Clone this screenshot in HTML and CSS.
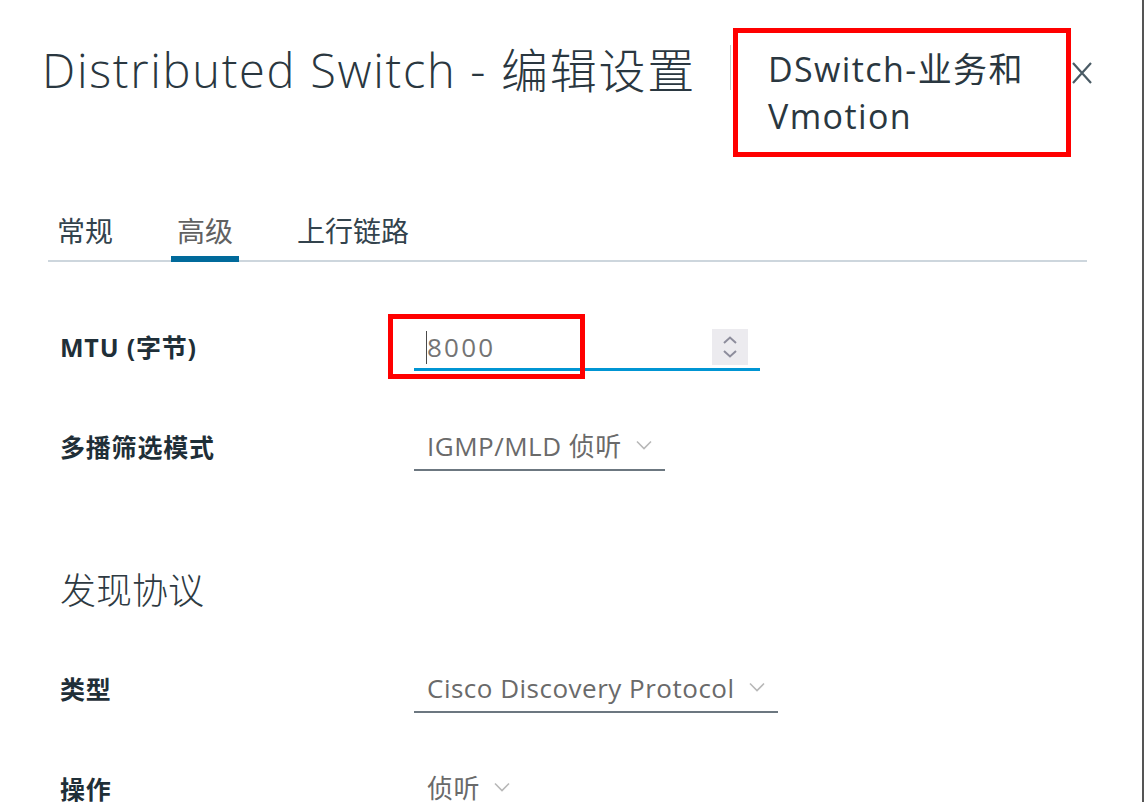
FILE: index.html
```html
<!DOCTYPE html>
<html lang="zh-CN">
<head>
<meta charset="utf-8">
<title>Distributed Switch - 编辑设置</title>
<link rel="stylesheet" href="styles.css">
</head>
<body>
<div class="window">
  <header class="header">
    <h1 class="title">Distributed Switch - 编辑设置</h1>
    <span class="divider"></span>
    <div class="subtitle">DSwitch-业务和<br>Vmotion</div>
    <button class="close" type="button" aria-label="关闭">
      <svg width="20" height="22" viewBox="0 0 20 22"><path d="M1 1 L19 21 M19 1 L1 21" stroke="#4a5b65" stroke-width="2.2" fill="none"/></svg>
    </button>
  </header>

  <nav class="tabs">
    <a class="tab">常规</a>
    <a class="tab active">高级</a>
    <a class="tab">上行链路</a>
  </nav>

  <div class="form">
    <div class="row">
      <div class="label">MTU (字节)</div>
      <div class="input">
        <span class="caret"></span><span class="input-text">8000</span>
        <span class="spinner">
          <svg width="14" height="8" viewBox="0 0 14 8"><polyline points="1,7 7,1.5 13,7" fill="none" stroke="#8d8d9c" stroke-width="2"/></svg>
          <svg width="14" height="8" viewBox="0 0 14 8"><polyline points="1,1 7,6.5 13,1" fill="none" stroke="#8d8d9c" stroke-width="2"/></svg>
        </span>
        <span class="annot"></span>
      </div>
    </div>

    <div class="row">
      <div class="label">多播筛选模式</div>
      <div class="select">
        <span class="select-text">IGMP/MLD 侦听</span>
        <svg class="chev" width="16" height="10" viewBox="0 0 16 10"><polyline points="1,1.5 8,8.5 15,1.5" fill="none" stroke="#b8b8b8" stroke-width="1.6"/></svg>
      </div>
    </div>

    <h2 class="section">发现协议</h2>

    <div class="row">
      <div class="label">类型</div>
      <div class="select">
        <span class="select-text">Cisco Discovery Protocol</span>
        <svg class="chev" width="16" height="10" viewBox="0 0 16 10"><polyline points="1,1.5 8,8.5 15,1.5" fill="none" stroke="#b8b8b8" stroke-width="1.6"/></svg>
      </div>
    </div>

    <div class="row">
      <div class="label">操作</div>
      <div class="select">
        <span class="select-text">侦听</span>
        <svg class="chev" width="16" height="10" viewBox="0 0 16 10"><polyline points="1,1.5 8,8.5 15,1.5" fill="none" stroke="#b8b8b8" stroke-width="1.6"/></svg>
      </div>
    </div>
  </div>
</div>
</body>
</html>
```

FILE: styles.css
```css
html, body {
  margin: 0;
  padding: 0;
  background: #ffffff;
}

body {
  width: 1144px;
  height: 802px;
  overflow: hidden;
  font-family: "Open Sans", "Noto Sans CJK SC", sans-serif;
}

.window {
  box-sizing: border-box;
  width: 1144px;
  height: 802px;
  padding-left: 44px;
  border-right: 2px solid #555555;
}

/* Header */
.header {
  display: flex;
  align-items: flex-start;
  padding-top: 28px;
  padding-right: 50px;
}

.title {
  margin: 14px 0 0 -2px;
  font-size: 47px;
  line-height: 56px;
  font-weight: 300;
  color: #2a3740;
  white-space: nowrap;
  letter-spacing: 1.7px;
}

.divider {
  margin-left: auto;
  margin-top: 17px;
  margin-right: 2px;
  width: 1px;
  height: 45px;
  background: #c9c9c9;
}

.subtitle {
  box-sizing: border-box;
  width: 338px;
  height: 129px;
  border: 5px solid #ff0000;
  padding: 13px 0 0 30px;
  font-size: 34px;
  line-height: 47px;
  font-weight: 400;
  letter-spacing: 1.4px;
  color: #2a3740;
}

.close {
  margin: 34px 0 0 1px;
  padding: 0;
  border: 0;
  background: none;
  width: 20px;
  height: 22px;
  display: block;
}

.close svg {
  display: block;
}

/* Tabs */
.tabs {
  display: flex;
  gap: 52px;
  margin: 56px 0 0 4px;
  padding-left: 3px;
  width: 1036px;
  border-bottom: 2px solid #cdd6dd;
}

.tab {
  display: block;
  padding: 0 6px 7px;
  margin-bottom: -2px;
  border-bottom: 6px solid transparent;
  font-size: 28px;
  line-height: 36px;
  color: #33434d;
  cursor: pointer;
}

.tab.active {
  border-bottom-color: #006a9b;
  color: #616161;
}

/* Form */
.form {
  display: flex;
  flex-direction: column;
  gap: 54px;
  padding: 64px 0 0 16px;
}

.row {
  display: grid;
  grid-template-columns: 354px auto;
  align-items: center;
  justify-items: start;
}

.label {
  font-size: 25px;
  font-weight: 700;
  letter-spacing: 0.8px;
  color: #1f2f38;
  line-height: 32px;
  margin-top: -3px;
}

.input {
  position: relative;
  box-sizing: border-box;
  width: 346px;
  height: 45px;
  display: flex;
  align-items: center;
  padding-left: 12px;
  padding-right: 12px;
  border-bottom: 3px solid #0095d3;
}

.caret {
  display: inline-block;
  width: 1px;
  height: 33px;
  background: #4a4a4a;
}

.input-text {
  flex: 1;
  font-size: 26px;
  letter-spacing: 2.2px;
  color: #747474;
  line-height: 34px;
}

.spinner {
  width: 36px;
  height: 36px;
  background: #ecebef;
  display: flex;
  flex-direction: column;
  align-items: center;
  justify-content: center;
  gap: 6px;
}

.spinner svg {
  display: block;
}

.annot {
  position: absolute;
  left: -26px;
  top: -12px;
  width: 197px;
  height: 65px;
  box-sizing: border-box;
  border: 5px solid #ff0000;
  pointer-events: none;
}

.select {
  box-sizing: border-box;
  height: 46px;
  display: inline-flex;
  align-items: center;
  padding: 0 13px;
  border-bottom: 2px solid #6c7780;
}

.select-text {
  font-size: 26px;
  letter-spacing: 0.5px;
  color: #6a6a6a;
  line-height: 34px;
  margin-top: -2px;
}

.chev {
  display: block;
  margin-left: 14px;
  margin-top: -4px;
}

.section {
  margin: 42px 0 -2px 0;
  font-size: 36px;
  line-height: 48px;
  font-weight: 300;
  color: #2e3a42;
}
```
